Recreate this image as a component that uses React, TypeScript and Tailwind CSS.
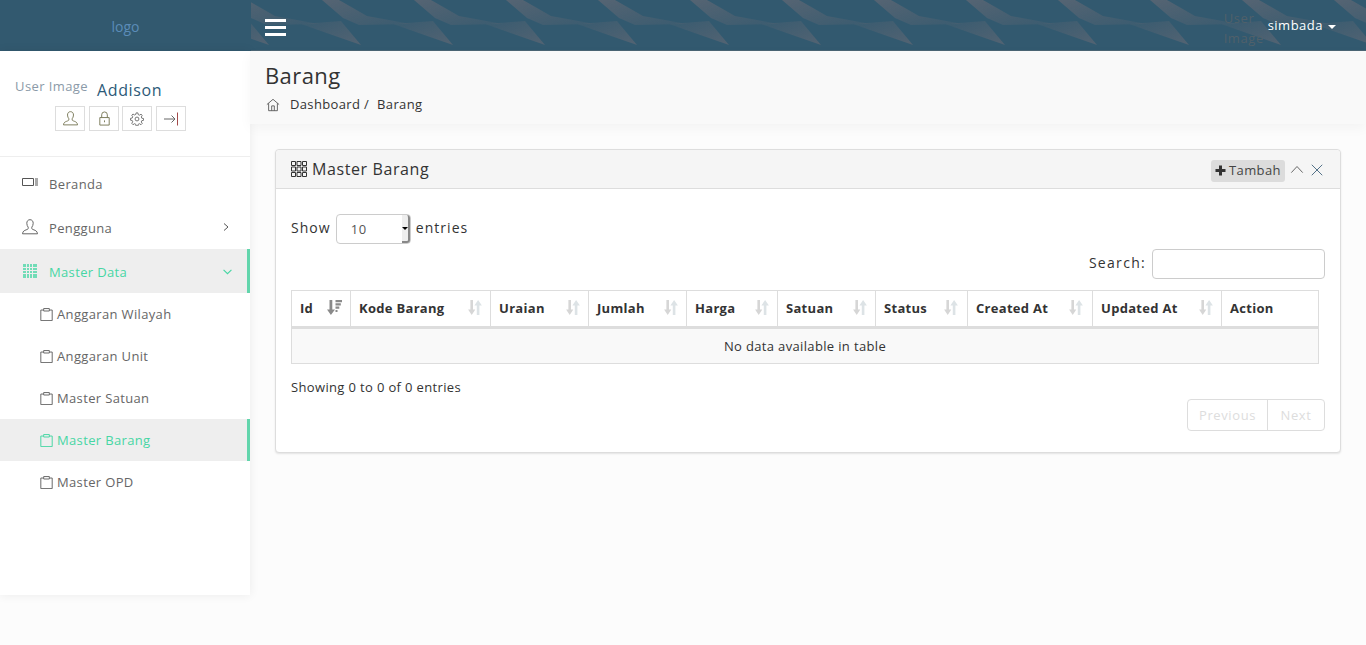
import React from "react";

const Pattern = () => (
  <svg className="absolute inset-0 h-full w-full" aria-hidden="true">
    <defs>
      <linearGradient id="w1" x1="0" y1="0" x2="1" y2="1">
        <stop offset="0" stopColor="#937779" stopOpacity="0.36" />
        <stop offset="1" stopColor="#937779" stopOpacity="0.08" />
      </linearGradient>
      <linearGradient id="w2" x1="0" y1="0" x2="1" y2="1">
        <stop offset="0" stopColor="#937779" stopOpacity="0.06" />
        <stop offset="1" stopColor="#937779" stopOpacity="0.34" />
      </linearGradient>
      <pattern id="hdr" width="92" height="50" patternUnits="userSpaceOnUse">
        {[0, -92].map((dx) => (
          <g key={dx} transform={`translate(${dx} 0)`}>
            <polygon points="71,0 88,0 116,16 160,24 108,25 92,18" fill="url(#w1)" />
            <polygon points="50,24 90,21 110,45" fill="url(#w2)" />
          </g>
        ))}
      </pattern>
    </defs>
    <rect width="100%" height="100%" fill="url(#hdr)" />
  </svg>
);

const Ic = ({ children, className = "", size = 16 }: { children: React.ReactNode; className?: string; size?: number }) => (
  <svg width={size} height={size} viewBox="0 0 16 16" fill="none" stroke="currentColor" strokeWidth="1" className={"shrink-0 " + className}>
    {children}
  </svg>
);

const UserIc = ({ className = "", size = 16 }: { className?: string; size?: number }) => (
  <Ic className={className} size={size}>
    <path d="M8 .7c-2 0-3.200 1.500-3.200 3.600 0 1.700.7 3 1.400 3.900v1.300c0 .6-.8.9-2.200 1.400-1.500.6-3.200 1.100-3.500 3.900h15c-.3-2.800-2-3.300-3.500-3.900-1.400-.5-2.200-.8-2.200-1.400V8.200c.7-.9 1.400-2.200 1.400-3.900C11.200 2.200 10 .7 8 .7z" />
  </Ic>
);

const Clip = () => (
  <Ic size={13} className="mb-[2px]">
    <path d="M4 2.500H1v13h14v-13h-3M4.500.7h7v3h-7z" strokeWidth="1.200" />
  </Ic>
);

const SortIc = ({ active = false }: { active?: boolean }) =>
  active ? (
    <svg width="15" height="15" viewBox="0 0 15 15" className="mb-[2px] shrink-0 text-[#8a8a8a]" fill="currentColor">
      <path d="M2.500 0h2.800v9.500H8l-4.100 5.500L0 9.500h2.500z" />
      <path d="M8.500 0h6.500v2.200H8.500zM8.500 3.300h5.300v2.200H8.500zM8.500 6.600h3.800v2.200H8.500zM8.500 9.900h2v2.200h-2z" />
    </svg>
  ) : (
    <svg width="14" height="15" viewBox="0 0 14 15" className="mb-[2px] shrink-0" fill="currentColor">
      <path fill="#d6d6d6" d="M2.400 0h2.600v9.500h2.300l-3.600 5.500-3.600-5.500h2.300z" />
      <path fill="#dde3e6" d="M8.800 15h2.600V5.500h2.500L10.100 0 6.400 5.500h2.400z" />
    </svg>
  );

const columns = [
  { t: "Id", c: "w-[59px] pr-[8px]", active: true },
  { t: "Kode Barang", c: "w-[140px] pr-[8px]" },
  { t: "Uraian", c: "w-[98px] pr-[8px]" },
  { t: "Jumlah", c: "w-[98px] pr-[8px]" },
  { t: "Harga", c: "w-[91px] pr-[8px]" },
  { t: "Satuan", c: "w-[98px] pr-[8px]" },
  { t: "Status", c: "w-[92px] pr-[9px]" },
  { t: "Created At", c: "w-[125px] pr-[9px]" },
  { t: "Updated At", c: "w-[129px] pr-[8px]" },
  { t: "Action", c: "w-[97px] pr-[8px]", none: true },
];

const subItems = ["Anggaran Wilayah", "Anggaran Unit", "Master Satuan", "Master Barang", "Master OPD"];

export default function App() {
  return (
    <div className="flex h-[645px] w-[1366px] flex-col overflow-hidden bg-[#fcfcfc] font-['Open_Sans',sans-serif] text-[13px] tracking-[0.35px] text-[#333]">
      <header className="flex h-[51px] shrink-0 bg-[#32596f]">
        <div className="flex w-[251px] shrink-0 items-center justify-center pt-[1px] text-[14px] tracking-[0px] text-[#5b8cb8]">logo</div>
        <div className="relative flex flex-1 items-center justify-between border-b border-[#4a6473]">
          <Pattern />
          <div className="relative ml-[14px] mt-[4px] flex w-[21px] flex-col gap-[4px]">
            <span className="h-[3px] bg-white" />
            <span className="h-[3px] bg-white" />
            <span className="h-[3px] bg-white" />
          </div>
          <div className="relative mr-[30px] flex items-center">
            <div className="mr-[6px] w-[38px] pt-[6px] text-[13px] leading-[20px] tracking-[0.6px] text-[#50606a]">User Image</div>
            <span className="pt-[1px] tracking-[0.5px] text-white">simbada</span>
            <span className="ml-[5px] mt-[3px] border-x-[4px] border-t-[4px] border-x-transparent border-t-white" />
          </div>
        </div>
      </header>

      <div className="flex min-h-0 flex-1">
        <aside className="h-[544px] w-[250px] shrink-0 bg-white shadow-[0_0_10px_rgba(0,0,0,0.07)]">
          <div className="h-[106px] border-b border-[#eee]">
            <div className="flex h-[55px] items-start pl-[15px] pt-[26px]">
              <span className="tracking-[0.4px] text-[#8b9aa8]">User Image</span>
              <span className="ml-[9px] mt-[1px] text-[16px] tracking-[0.65px] text-[#2d5a78]">Addison</span>
            </div>
            <div className="ml-[55px] flex">
              <span className="flex h-[25px] w-[30px] items-center justify-center border border-[#ddd] text-[#775]">
                <UserIc size={15} />
              </span>
              <span className="ml-[4px] flex h-[25px] w-[30px] items-center justify-center border border-[#ddd] text-[#775]">
                <Ic size={15}>
                  <path d="M3 7h10v8H3zM5 7V4a3 3 0 0 1 6 0v3M8 10v2" />
                </Ic>
              </span>
              <span className="ml-[3px] flex h-[25px] w-[30px] items-center justify-center border border-[#ddd] text-[#666]">
                <Ic size={14}>
                  <circle cx="8" cy="8" r="2.200" />
                  <path d="M7 1h2l.4 2 1.500.6 1.700-1.100 1.400 1.400-1.100 1.700.6 1.500 2 .4v2l-2 .4-.6 1.500 1.100 1.700-1.400 1.400-1.700-1.100-1.500.6-.4 2H7l-.4-2-1.500-.6-1.700 1.100L2 12.900 3.100 11.200l-.6-1.500-2-.4v-2l2-.4.6-1.500L2 3.700 3.400 2.300l1.700 1.100 1.500-.6z" />
                </Ic>
              </span>
              <span className="ml-[4px] flex h-[25px] w-[30px] items-center justify-center border border-[#ddd] text-[#666]">
                <Ic size={16}>
                  <path d="M1 8h11M8.500 4.500 12 8l-3.500 3.500" />
                  <path d="M14.500 1.500v13" stroke="#a34a4a" />
                </Ic>
              </span>
            </div>
          </div>

          <nav className="pt-[4px] text-[#666]">
            <div className="flex h-[44px] items-center pl-[22px] pt-[4px]">
              <Ic size={16} className="mb-[4px] text-[#555]">
                <path d="M.5 3.500h11v7H.5zM13 4h3M13 6h3M13 8h3M13 10h3" />
              </Ic>
              <span className="ml-[11px]">Beranda</span>
            </div>
            <div className="flex h-[44px] items-center pl-[22px] pr-[20px] pt-[4px]">
              <UserIc className="mb-[4px] text-[#666]" />
              <span className="ml-[11px] flex-1">Pengguna</span>
              <Ic size={8} className="mb-[4px] text-[#555]">
                <path d="m4 1 8 7-8 7" strokeWidth="2" />
              </Ic>
            </div>
            <div className="flex h-[44px] items-center border-r-[3px] border-[#62d5ac] bg-[#eee] pl-[22px] pr-[15px] pt-[4px] text-[#47d6a4]">
              <svg width="16" height="16" viewBox="0 0 16 16" className="mb-[4px] shrink-0" fill="currentColor">
                <path d="M1 1h14v14H1z" fillOpacity="0.75" />
                <path d="M1 4.500h14M1 7.500h14M1 10.500h14M4.500 1v14M7.500 1v14M10.500 1v14" stroke="#eee" strokeWidth="1" />
              </svg>
              <span className="ml-[11px] flex-1">Master Data</span>
              <Ic size={9} className="mb-[4px]">
                <path d="m1 5 7 7 7-7" strokeWidth="2" />
              </Ic>
            </div>
            {subItems.map((s) => {
              const active = s === "Master Barang";
              return (
                <div
                  key={s}
                  className={
                    "flex h-[42px] items-center pl-[40px] pt-[2px] " +
                    (active ? "border-r-[3px] border-[#62d5ac] bg-[#eee] text-[#47d6a4]" : "text-[#666]")
                  }
                >
                  <Clip />
                  <span className="ml-[4px]">{s}</span>
                </div>
              );
            })}
          </nav>
        </aside>

        <main className="min-w-0 flex-1">
          <div className="h-[73px] bg-[#f9f9f9] pl-[15px] pt-[8px] shadow-[0_4px_12px_rgba(0,0,0,0.04)]">
            <h1 className="text-[22px] font-normal leading-[32px] tracking-[0.4px] text-[#333]">Barang</h1>
            <div className="mt-[4px] flex items-center text-[#333]">
              <Ic size={14} className="ml-px text-[#555]">
                <path d="M1 7.500 8 1.500l7 6M3 6v8.500h10V6M6.500 14.500V9h3v5.500" />
              </Ic>
              <span className="ml-[10px]">Dashboard /</span>
              <span className="ml-[8px]">Barang</span>
            </div>
          </div>

          <section className="ml-[25px] mr-[25px] mt-[25px] h-[304px] rounded-[4px] border border-[#ddd] bg-white shadow-[0_1px_2px_rgba(0,0,0,0.1)]">
            <div className="flex h-[39px] items-center rounded-t-[4px] border-b border-[#ddd] bg-[#f5f5f5] pl-[15px] pr-[16px]">
              <svg width="16" height="16" viewBox="0 0 16 16" className="shrink-0 text-[#333]" fill="none" stroke="currentColor">
                <path d="M.5.500h4v4h-4zM6 .500h4v4H6zM11.500.500h4v4h-4zM.5 6h4v4h-4zM6 6h4v4H6zM11.500 6h4v4h-4zM.5 11.500h4v4h-4zM6 11.500h4v4H6zM11.500 11.500h4v4h-4z" />
              </svg>
              <span className="ml-[5px] flex-1 text-[16px] tracking-[0.6px] text-[#333]">Master Barang</span>
              <span className="mt-[4px] flex h-[22px] w-[74px] items-center justify-center rounded-[3px] bg-[#dcdcdc] tracking-[0.4px] text-[#444]">
                <svg width="11" height="11" viewBox="0 0 11 11" className="mb-[1px] mr-[3px] shrink-0" fill="#333">
                  <path d="M4 .500h3v3.500h3.500v3H7v3.500H4V7H.5V4H4z" />
                </svg>
                Tambah
              </span>
              <Ic size={14} className="ml-[5px] mt-[2px] text-[#555]">
                <path d="m1.500 11 6.500-7 6.500 7" />
              </Ic>
              <Ic size={14} className="ml-[6px] mt-[2px] text-[#3d5f78]">
                <path d="m2 2 12 12M14 2 2 14" />
              </Ic>
            </div>

            <div className="px-[15px]">
              <div className="mt-[25px] flex h-[30px] items-center text-[14px] tracking-[1.05px]">
                <span className="mb-[3px]">Show</span>
                <span className="relative ml-[5px] mr-[5px] flex h-[30px] w-[75px] items-center rounded-[4px] border border-[#ccc] pl-[14px] pt-[2px] text-[13px] tracking-[0.6px] text-[#555]">
                  10
                  <span className="absolute bottom-0 right-0 top-0 flex w-[8px] items-center justify-center rounded-r-[3px] border-b-2 border-r-2 border-[#888] bg-[#eee]">
                    <span className="border-x-[3px] border-t-[3px] border-x-transparent border-t-black" />
                  </span>
                </span>
                <span className="mb-[3px]">entries</span>
              </div>

              <div className="mt-[5px] flex h-[30px] items-center justify-end text-[14px] tracking-[1.3px]">
                <span className="mb-[4px]">Search:</span>
                <span className="ml-[6px] h-[30px] w-[173px] rounded-[4px] border border-[#ccc] bg-white" />
              </div>

              <div className="mt-[11px] w-[1028px] border-x border-t border-[#ddd]">
                <div className="flex h-[38px] border-b-[3px] border-[#ddd] font-bold tracking-[0.3px] text-[#333]">
                  {columns.map((c, i) => (
                    <div
                      key={c.t}
                      className={
                        c.c +
                        " flex shrink-0 items-center justify-between pl-[8px] " +
                        (i < columns.length - 1 ? "border-r border-[#ddd]" : "")
                      }
                    >
                      <span>{c.t}</span>
                      {!c.none && <SortIc active={c.active} />}
                    </div>
                  ))}
                </div>
                <div className="flex h-[35px] items-center justify-center border-b border-[#ddd] bg-[#f9f9f9] pt-[1px] text-[#333]">
                  No data available in table
                </div>
              </div>

              <div className="mt-[14px] leading-[18px] text-[#333]">Showing 0 to 0 of 0 entries</div>

              <div className="mt-[3px] flex justify-end">
                <div className="flex h-[32px] rounded-[4px] border border-[#ddd] tracking-[0.6px] text-[#ddd]">
                  <span className="flex w-[80px] items-center justify-center border-r border-[#ddd] pt-[1px]">Previous</span>
                  <span className="flex w-[56px] items-center justify-center pt-[1px]">Next</span>
                </div>
              </div>
            </div>
          </section>
        </main>
      </div>
    </div>
  );
}
